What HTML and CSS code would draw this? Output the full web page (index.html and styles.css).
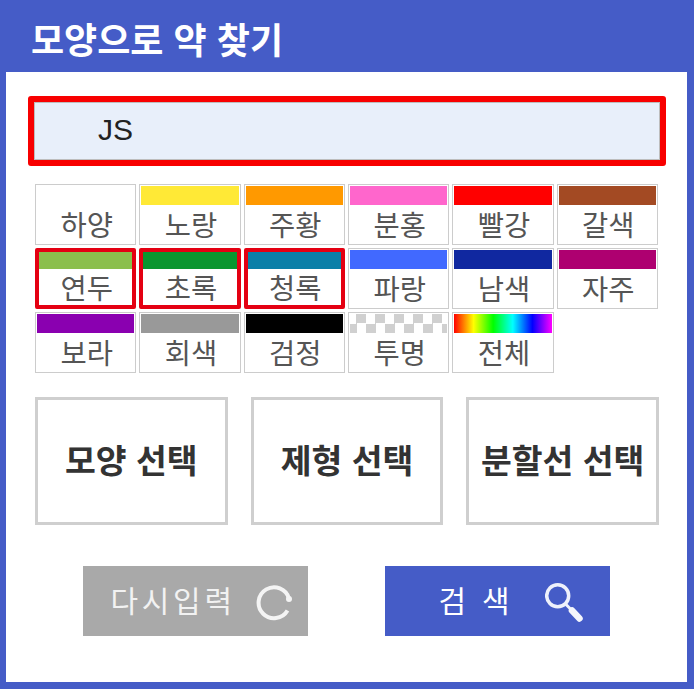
FILE: index.html
```html
<!DOCTYPE html>
<html lang="ko">
<head>
    <meta charset="UTF-8">
    <meta name="viewport" content="width=device-width, initial-scale=1.0">
    <title>모양으로 약 찾기</title>
    <link rel="stylesheet" href="styles.css">
</head>
<body>
    <div class="pill-panel">
        <div class="panel-title">모양으로 약 찾기</div>

        <div class="panel-body">
            <div class="code-box">
                <div class="code-input">JS</div>
            </div>

            <div class="color-grid">
                <div class="color-cell"><span class="chip"></span><span class="color-name">하양</span></div>
                <div class="color-cell"><span class="chip yellow"></span><span class="color-name">노랑</span></div>
                <div class="color-cell"><span class="chip orange"></span><span class="color-name">주황</span></div>
                <div class="color-cell"><span class="chip pink"></span><span class="color-name">분홍</span></div>
                <div class="color-cell"><span class="chip red"></span><span class="color-name">빨강</span></div>
                <div class="color-cell"><span class="chip brown"></span><span class="color-name">갈색</span></div>

                <div class="color-cell selected"><span class="chip lime"></span><span class="color-name">연두</span></div>
                <div class="color-cell selected"><span class="chip green"></span><span class="color-name">초록</span></div>
                <div class="color-cell selected"><span class="chip teal"></span><span class="color-name">청록</span></div>
                <div class="color-cell"><span class="chip blue"></span><span class="color-name">파랑</span></div>
                <div class="color-cell"><span class="chip navy"></span><span class="color-name">남색</span></div>
                <div class="color-cell"><span class="chip magenta"></span><span class="color-name">자주</span></div>

                <div class="color-cell"><span class="chip purple"></span><span class="color-name">보라</span></div>
                <div class="color-cell"><span class="chip gray"></span><span class="color-name">회색</span></div>
                <div class="color-cell"><span class="chip black"></span><span class="color-name">검정</span></div>
                <div class="color-cell"><span class="chip clear"></span><span class="color-name">투명</span></div>
                <div class="color-cell"><span class="chip rainbow"></span><span class="color-name">전체</span></div>
            </div>

            <div class="choice-row">
                <button class="choice-btn">모양 선택</button>
                <button class="choice-btn">제형 선택</button>
                <button class="choice-btn">분할선 선택</button>
            </div>

            <div class="action-row">
                <button class="action-btn reset">
                    <span class="action-label">다시입력</span>
                    <svg class="reset-icon" width="38" height="38" viewBox="0 0 38 38">
                        <path d="M32.5 27.5A15.5 15.5 0 1 1 34 15.5" fill="none" stroke="#f4f4f4" stroke-width="4"/>
                        <circle cx="34" cy="16" r="3" fill="#f4f4f4"/>
                    </svg>
                </button>
                <button class="action-btn search">
                    <span class="action-label">검 색</span>
                    <svg class="search-icon" width="42" height="44" viewBox="0 0 42 44">
                        <circle cx="12.7" cy="13.7" r="11" fill="none" stroke="#eef1fb" stroke-width="3.5"/>
                        <path d="M20.5 22l5 5" fill="none" stroke="#eef1fb" stroke-width="3"/>
                        <path d="M27 28.5l7.5 8" fill="none" stroke="#f4f6fc" stroke-width="6.5" stroke-linecap="round"/>
                    </svg>
                </button>
            </div>
        </div>
    </div>
</body>
</html>
```

FILE: styles.css
```css
* {
    margin: 0;
    padding: 0;
    box-sizing: border-box;
}

body {
    width: 694px;
    height: 690px;
    background: #fff;
    font-family: "Noto Sans CJK KR", "Noto Sans", sans-serif;
    overflow: hidden;
}

.pill-panel {
    height: 689px;
    border: solid #455cc7;
    border-width: 0 7px 7px 6px;
    display: flex;
    flex-direction: column;
}

.panel-title {
    height: 72px;
    margin: 0 -7px 0 -6px;
    padding-left: 31px;
    background: #455cc7;
    color: #fff;
    font-size: 36px;
    font-weight: 700;
    line-height: 76px;
    flex-shrink: 0;
}

.panel-body {
    padding: 24px 21px 0 22px;
}

/* search box with red highlight */
.code-box {
    height: 70px;
    border: 6px solid #f80000;
    border-radius: 3px;
}

.code-input {
    height: 100%;
    padding-left: 63px;
    background: #e8effa;
    border: 1px solid #bdbdbd;
    font-family: "Liberation Sans", Arial, sans-serif;
    font-size: 30px;
    line-height: 54px;
    color: #222;
}

.color-grid {
    margin: 18px 8px 0 7px;
    display: grid;
    grid-template-columns: repeat(6, 1fr);
    grid-auto-rows: 61px;
    gap: 3px;
}

.color-cell {
    display: flex;
    flex-direction: column;
    padding: 1px;
    border: 1px solid #ccc;
}

.color-cell.selected {
    padding: 0;
    border: 4px solid #e40012;
    border-radius: 2px;
}

.chip {
    display: block;
    height: 19px;
    flex-shrink: 0;
}

.selected .chip {
    height: 17px;
}

.color-name {
    flex: 1;
    padding-left: 2px;
    text-align: center;
    font-size: 28.5px;
    line-height: 38px;
    color: #555;
}

.selected .color-name {
    line-height: 36px;
}

.yellow { background: #ffe936; }
.orange { background: #ff9900; }
.pink { background: #ff66cc; }
.red { background: #ff0000; }
.brown { background: #a34a23; }
.lime { background: #8bbf4d; }
.green { background: #0a962f; }
.teal { background: #0a7fa8; }
.blue { background: #4169ff; }
.navy { background: #1028a0; }
.magenta { background: #ae0070; }
.purple { background: #8a00b0; }
.gray { background: #999; }
.black { background: #000; }

.clear {
    background: conic-gradient(#d0d0d0 25%, #fff 0 50%, #d0d0d0 0 75%, #fff 0) -3px 0 / 19px 19px;
}

.rainbow {
    background: linear-gradient(90deg, #f00, #ff0, #0f0, #0ff, #00f, #f0f);
}

.choice-row {
    margin: 24px 7px 0;
    display: flex;
    gap: 23px;
}

.choice-btn {
    flex: 1;
    height: 128px;
    padding-bottom: 5px;
    background: #fff;
    border: 3px solid #cfcfcf;
    font-family: inherit;
    font-size: 33.5px;
    font-weight: 700;
    color: #333;
}

.action-row {
    margin-top: 41px;
    padding-right: 2px;
    display: flex;
    justify-content: center;
    gap: 77px;
}

.action-btn {
    position: relative;
    width: 225px;
    height: 70px;
    padding-bottom: 4px;
    border: 0;
    font-family: inherit;
    font-size: 30px;
    text-align: left;
}

.action-label {
    letter-spacing: 3.7px;
}

.reset {
    padding-left: 28px;
    background: #a9a9a9;
    color: #f2f2f2;
}

.search {
    padding-left: 54px;
    background: #455cc7;
    color: #fff;
}

.reset-icon {
    position: absolute;
    left: 172px;
    top: 17px;
}

.search-icon {
    position: absolute;
    left: 160px;
    top: 16px;
}
```
